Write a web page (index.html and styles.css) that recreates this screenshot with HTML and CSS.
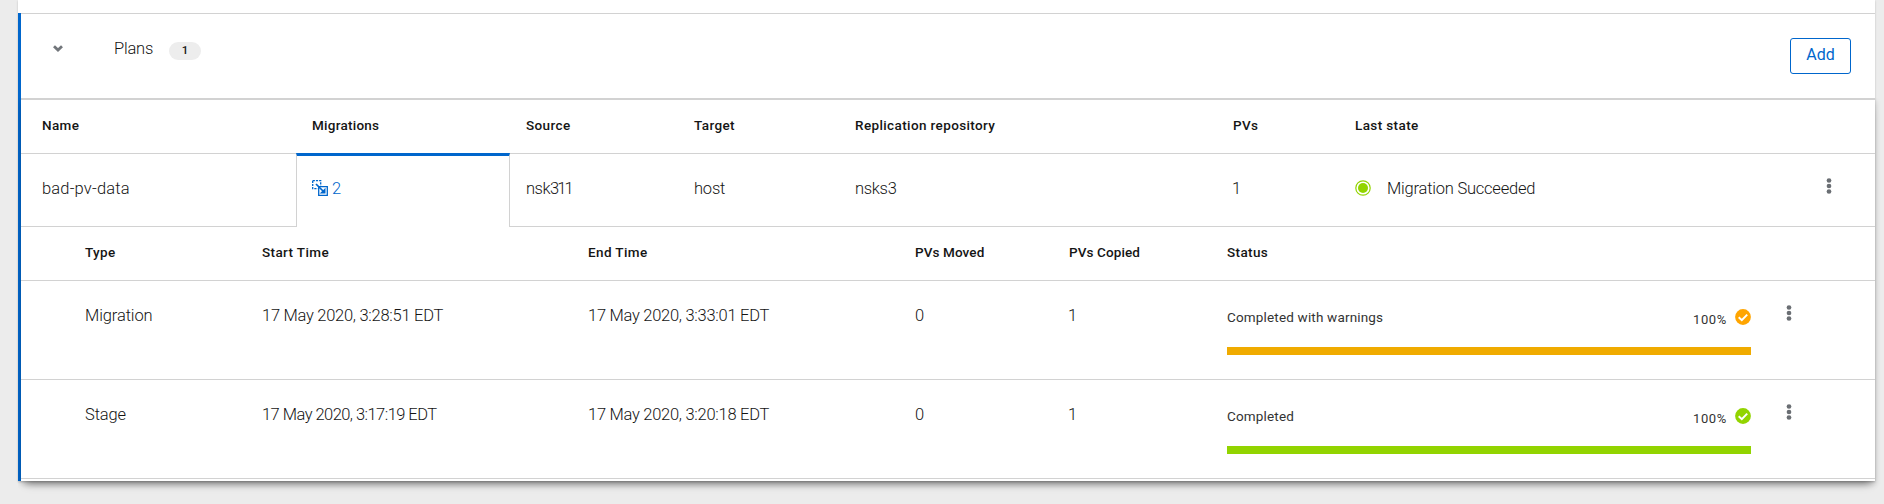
FILE: index.html
```html
<!DOCTYPE html>
<html lang="en">
<head>
<meta charset="utf-8">
<title>Plans</title>
<link rel="stylesheet" href="styles.css">
</head>
<body>
<svg class="defs" width="0" height="0">
  <symbol id="kebab" viewBox="0 0 6 18"><circle cx="3" cy="2.500" r="2.35"/><circle cx="3" cy="8" r="2.35"/><circle cx="3" cy="13.500" r="2.35"/></symbol>
  <symbol id="check" viewBox="0 0 16 16"><circle cx="8" cy="8" r="7.9"/><path d="M3.7 8.3 6.8 11.2 12.2 5.6" fill="none" stroke="#fff" stroke-width="2"/></symbol>
</svg>
<main class="card">
  <section class="plans">
    <header class="toolbar">
      <svg class="chevron" viewBox="0 0 10 7"><path d="M1 1.200 5 5 9 1.200" fill="none" stroke="#72767b" stroke-width="2.800"/></svg>
      <span class="title">Plans</span>
      <span class="badge">1</span>
      <button class="add">Add</button>
    </header>
    <div class="content">
      <div class="row plan head">
        <span class="n-name">Name</span><span class="cell tight">Migrations</span><span class="cell">Source</span><span class="cell">Target</span><span class="cell">Replication repository</span><span class="cell">PVs</span><span class="cell">Last state</span><span></span>
      </div>
      <div class="row plan item">
        <span class="name line">bad-pv-data</span>
        <a class="cell tab">
          <svg class="migrate" viewBox="0 0 16 16">
            <path d="M.7.7h8v5M.7.7v8h5" fill="none" stroke="currentColor" stroke-width="1.3" stroke-dasharray="2.2 1"/>
            <path d="M6.700 6.700h8.600v8.600H6.700z" fill="none" stroke="currentColor" stroke-width="1.3"/>
            <path d="M4 4l7 7" stroke="currentColor" stroke-width="1.7"/>
            <path d="M13.500 7.700v5.800H7.700z" fill="currentColor"/>
          </svg>
          <span>2</span>
        </a>
        <span class="cell line source">nsk<span class="digits">311</span></span><span class="cell line target">host</span><span class="cell line repo">nsks3</span><span class="cell line"><span class="one">1</span></span>
        <span class="cell line state"><svg class="ok" viewBox="0 0 16 16"><circle cx="8" cy="8" r="7.2" fill="none" stroke="#92d400" stroke-width="1.2"/><circle cx="8" cy="8" r="5"/></svg><span class="state-text">Migration Succeeded</span></span>
        <span class="line actions"><svg class="kebab"><use href="#kebab"/></svg></span>
      </div>
      <div class="row run head">
        <span>Type</span><span>Start Time</span><span>End Time</span><span class="tight">PVs Moved</span><span class="tight">PVs Copied</span><span>Status</span><span></span>
      </div>
      <div class="row run item">
        <span class="kind">Migration</span><span class="date">17 May 2020, 3:28:51 EDT</span><span class="date">17 May 2020, 3:33:01 EDT</span><span>0</span><span class="one">1</span>
        <div class="progress warning">
          <div class="info"><span class="label">Completed with warnings</span><span class="percent">100%</span><svg class="check"><use href="#check"/></svg></div>
          <div class="bar"></div>
        </div>
        <span class="actions"><svg class="kebab"><use href="#kebab"/></svg></span>
      </div>
      <div class="row run item">
        <span class="kind">Stage</span><span class="date narrow">17 May 2020, 3:17:19 EDT</span><span class="date">17 May 2020, 3:20:18 EDT</span><span>0</span><span class="one">1</span>
        <div class="progress success">
          <div class="info"><span class="label">Completed</span><span class="percent">100%</span><svg class="check"><use href="#check"/></svg></div>
          <div class="bar"></div>
        </div>
        <span class="actions"><svg class="kebab"><use href="#kebab"/></svg></span>
      </div>
    </div>
  </section>
</main>
</body>
</html>
```
FILE: styles.css
```css
* { box-sizing: border-box; }
body {
  margin: 0;
  height: 504px;
  overflow: hidden;
  background: #ececec;
  color: #151515;
  font: 300 16.5px/24px Roboto, sans-serif;
}
.defs { display: block; height: 0; }
.card {
  width: 1857px;
  height: 481px;
  margin-left: 18px;
  padding-top: 13px;
  background: #fff;
  box-shadow: 0 1px 2px rgba(3, 3, 3, .2);
}
.plans { height: 468px; border-left: 3px solid #06c; }
.toolbar {
  display: flex;
  height: 85px;
  border-top: 1px solid #d2d2d2;
}
.chevron { width: 10px; height: 7px; margin: 31px 0 0 32px; }
.title { width: 55px; margin: 23px 0 0 51px; letter-spacing: -.2px; }
.badge {
  width: 32px;
  height: 18px;
  margin-top: 28px;
  border-radius: 9px;
  background: #ededed;
  font-size: 11.5px;
  font-weight: 500;
  line-height: 17px;
  text-align: center;
}
.add {
  width: 61px;
  height: 36px;
  margin: 24px 24px 0 auto;
  padding: 0 0 3px;
  border: 1px solid #06c;
  border-radius: 3px;
  background: #fff;
  color: #06c;
  font: 400 16px/30px Roboto, sans-serif;
}
.content {
  height: 383px;
  border-top: 2px solid #d2d2d2;
  box-shadow: 0 8px 8px -5px rgba(3, 3, 3, .35), 0 3px 6px rgba(3, 3, 3, .2);
  clip-path: inset(0 -20px -20px -3px);
}
.row { display: grid; }
.plan { grid-template-columns: 275px 214px 168px 161px 378px 122px 425px 111px; }
.run {
  grid-template-columns: 177px 326px 327px 154px 158px 524px 124px;
  padding-left: 64px;
  border-bottom: 1px solid #d2d2d2;
}
.head {
  height: 54px;
  border-bottom: 1px solid #d2d2d2;
  font-size: 13.5px;
  font-weight: 500;
  line-height: 51px;
  letter-spacing: .38px;
}
.tight { letter-spacing: .1px; }
.cell.tight { letter-spacing: .25px; }
.cell { padding-left: 16px; }
.name, .n-name { padding-left: 21px; }
.name { letter-spacing: .18px; }
.source { letter-spacing: -.5px; }
.digits { letter-spacing: -1.900px; }
.target { letter-spacing: -.2px; }
.repo { letter-spacing: -.3px; }
.plan.item { height: 73px; line-height: 70px; }
.line { border-bottom: 1px solid #d2d2d2; }
.tab {
  display: flex;
  margin-top: -1px;
  padding-left: 15px;
  border: solid #d2d2d2;
  border-width: 3px 1px 0;
  border-top-color: #06c;
  color: #06c;
}
.migrate { width: 16px; height: 16px; margin: 24px 4px 0 0; }
.tab span { line-height: 66px; }
.state { display: flex; letter-spacing: -.22px; }
.ok { width: 16px; height: 16px; margin: 26px 16px 0 0; fill: #92d400; }
.one { margin-left: -1px; }
.actions { display: flex; justify-content: center; }
.plan .actions { padding-left: 19px; }
.kebab { width: 6px; height: 18px; margin-top: 24px; fill: #6a6e73; }
.run.item { height: 99px; padding-top: 23px; }
.run .actions { padding-right: 49px; }
.run .kebab { margin-top: 1px; }
.kind { letter-spacing: -.12px; }
.date { letter-spacing: -.27px; }
.narrow { letter-spacing: -.54px; }
.info { display: flex; height: 43px; font-size: 13.5px; line-height: 27px; }
.label { font-weight: 400; letter-spacing: .17px; }
.percent { margin-left: auto; padding-top: 2px; font-size: 13px; font-weight: 400; letter-spacing: .65px; }
.check { width: 16px; height: 16px; margin: 5px 0 0 8px; fill: currentColor; }
.bar { height: 8px; background: currentColor; }
.warning { color: #f0ab00; }
.success { color: #92d400; }
.warning .check { color: #ffa500; }
.label, .percent { color: #333; }
```
